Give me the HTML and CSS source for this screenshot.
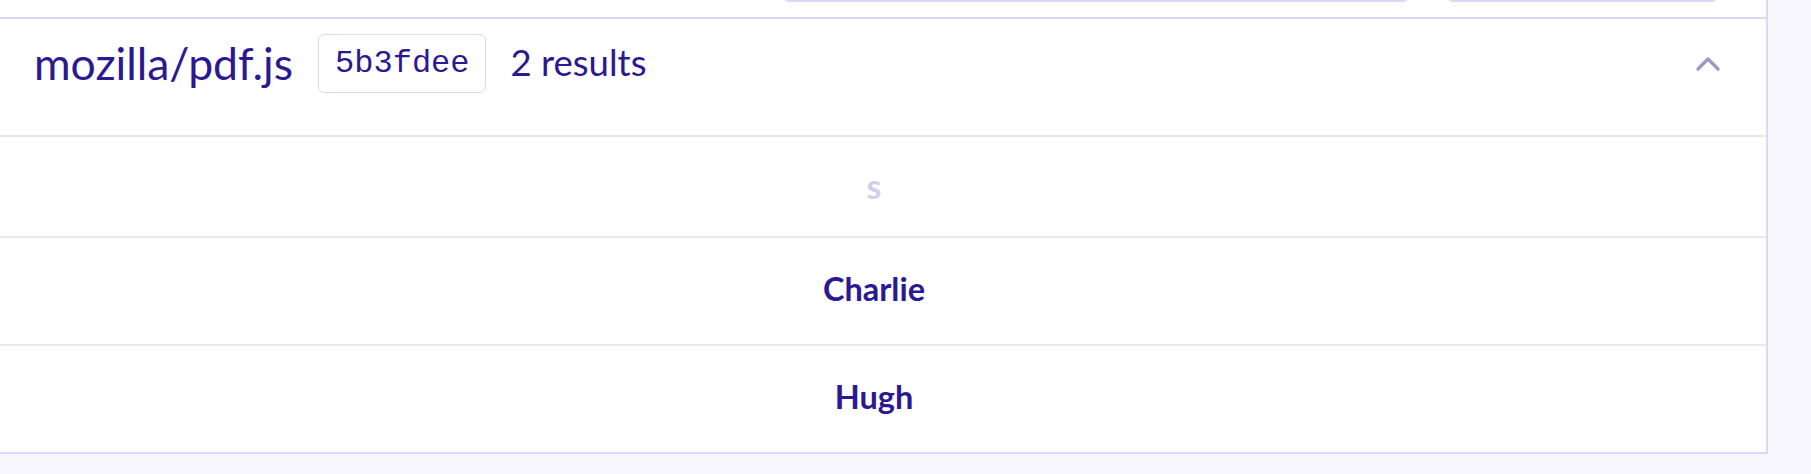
FILE: index.html
```html
<!DOCTYPE html>
<html lang="en">
<head>
<meta charset="utf-8">
<title>Results</title>
<link rel="stylesheet" href="styles.css">
</head>
<body>
  <div class="card">
    <div class="toolbar">
      <div class="field field-wide"></div>
      <div class="field field-narrow"></div>
    </div>
    <div class="repo-header">
      <span class="repo-name">mozilla/pdf.js</span>
      <span class="commit">5b3fdee</span>
      <span class="count">2 results</span>
      <span class="spacer"></span>
      <svg class="chevron" width="24" height="15" viewBox="0 0 24 15" aria-hidden="true">
        <polyline points="2,13 12,3 22,13" fill="none" stroke="#9f97c8" stroke-width="3.2" stroke-linecap="round" stroke-linejoin="round"/>
      </svg>
    </div>
    <div class="row row-head"><span class="col-label">s</span></div>
    <div class="row"><span class="name">Charlie</span></div>
    <div class="row"><span class="name">Hugh</span></div>
  </div>
</body>
</html>
```
FILE: styles.css
```css
html, body {
  margin: 0;
  padding: 0;
}
body {
  background: #f9f8fe;
  font-family: Lato, "Noto Sans", sans-serif;
  color: #2b1992;
  width: 1811px;
  height: 474px;
  overflow: hidden;
}
.card {
  display: flow-root;
  width: 1784px;
  margin-left: -18px;
  background: #ffffff;
  border-right: 2px solid #dcd6fb;
  border-bottom: 2px solid #dcd6fb;
}
.toolbar {
  display: flex;
  margin-top: -50px;
  padding: 0 0 15px 801px;
  gap: 38px;
  border-bottom: 2px solid #dcd6fb;
}
.field {
  height: 48px;
  border: 2px solid #dcd6fb;
  border-radius: 6px;
  background: #fff;
}
.field-wide { width: 622px; }
.field-narrow { width: 267px; }
.repo-header {
  display: flex;
  align-items: center;
  height: 60px;
  padding: 14px 46px 42px 52px;
  border-bottom: 2px solid #e8e6f2;
}
.repo-name {
  font-size: 44.5px;
  line-height: 1.2;
  font-weight: 400;
}
.commit {
  margin-left: 25px;
  height: 57px;
  box-sizing: content-box;
  padding: 0 16px;
  display: flex;
  align-items: center;
  border: 1.5px solid #dcd6fb;
  border-radius: 6px;
  font-family: "Liberation Mono", "DejaVu Sans Mono", monospace;
  font-size: 32px;
  color: #2b1992;
}
.count {
  margin-left: 24px;
  font-size: 36.5px;
  line-height: 1.2;
}
.spacer { flex: 1; }
.chevron {
  display: block;
}
.row {
  display: flex;
  align-items: center;
  justify-content: center;
  height: 108px;
  border-bottom: 2px solid #e8e6f2;
  padding-bottom: 6px;
  box-sizing: border-box;
}
.row:last-child {
  border-bottom: none;
  height: 106px;
}
.row-head {
  height: 101px;
  padding-bottom: 2px;
}
.col-label {
  font-size: 34px;
  font-weight: 700;
  color: #d2cdea;
}
.name {
  font-size: 32.5px;
  font-weight: 700;
  color: #2b1992;
}
```
